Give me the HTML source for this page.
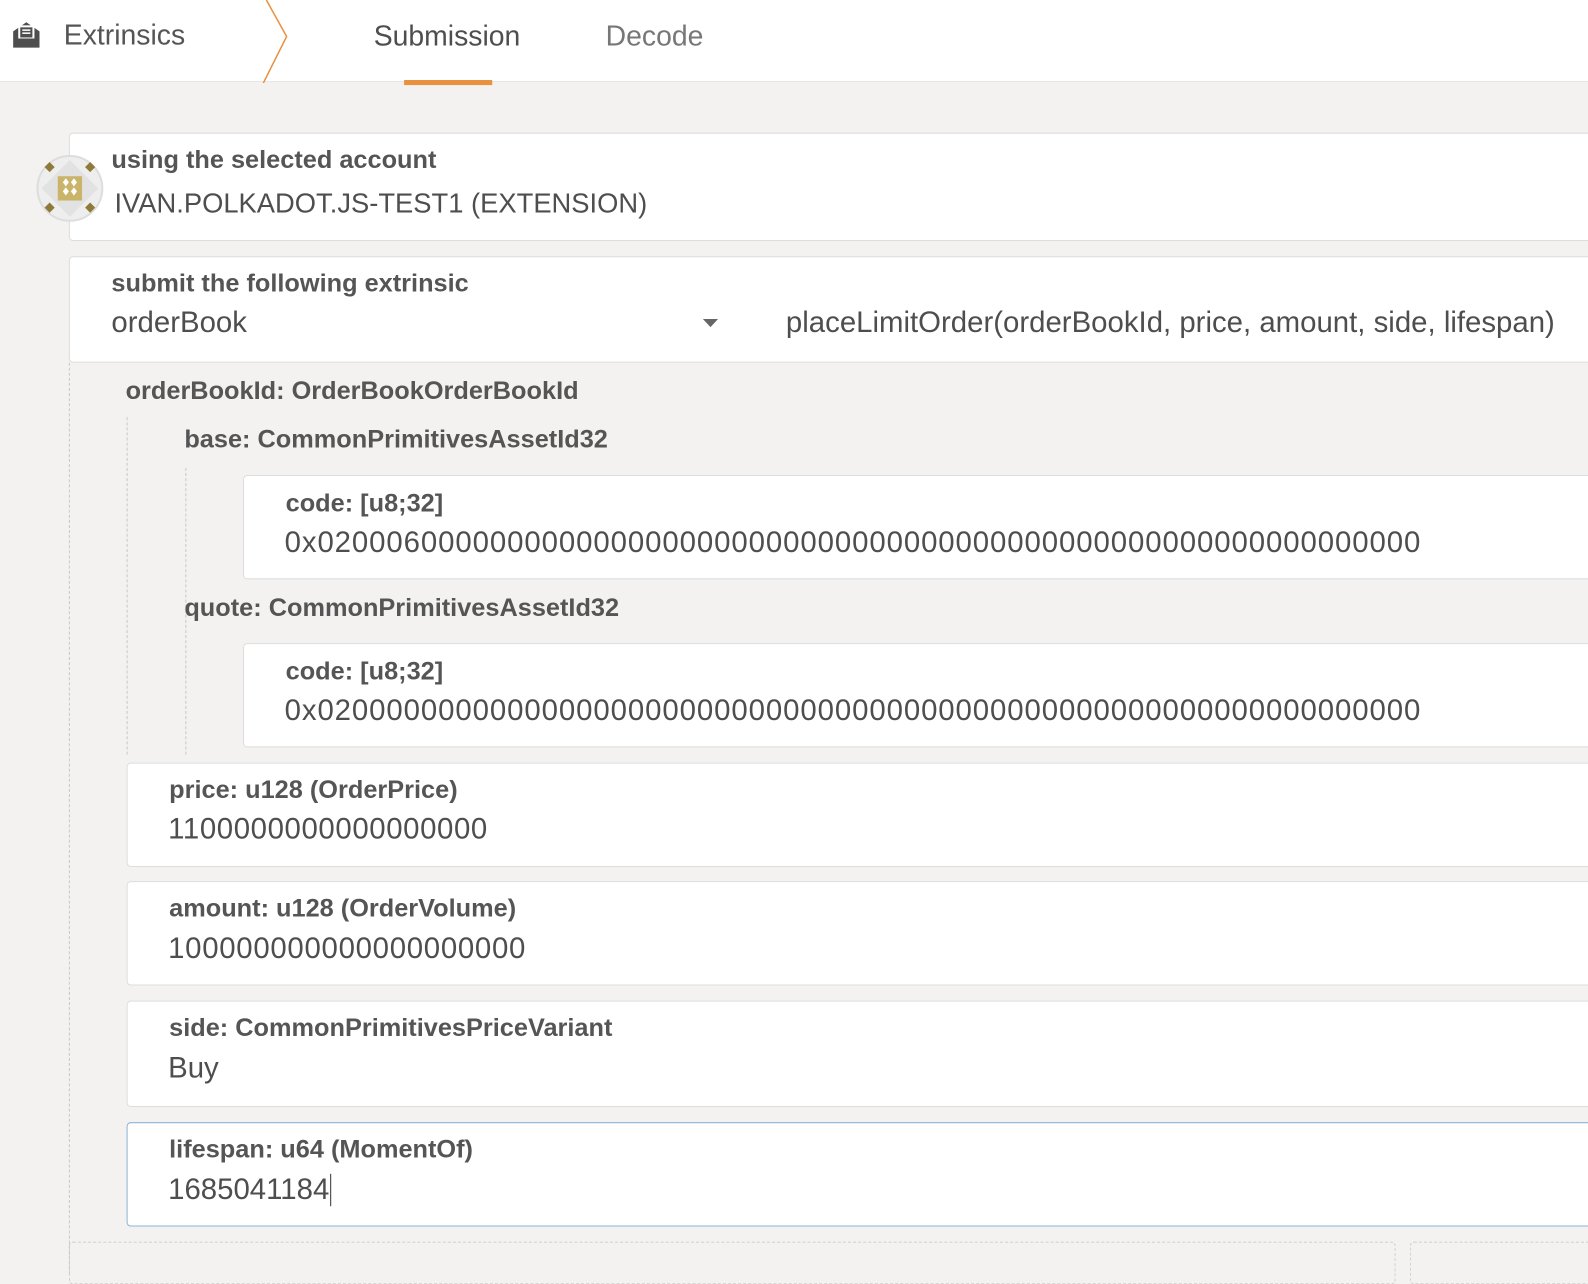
<!DOCTYPE html>
<html><head><meta charset="utf-8"><style>
body{margin:0;width:1588px;height:1256px;overflow:hidden;background:#f3f2f1;font-family:"Liberation Sans",sans-serif;color:#4e4e4e}
#w{position:absolute;left:0;top:0;width:1568px;height:1240px;transform:scale(1.0128);transform-origin:0 0}
.a{position:absolute;white-space:nowrap}
.hdr{position:absolute;left:0;top:0;width:1600px;height:80px;background:#fff;border-bottom:1px solid #e6e6e6}
.box{position:absolute;background:#fff;border:1px solid #ddd;border-radius:4px;right:-30px}
.lab{font-weight:bold;font-size:25px;color:#555}
.val{font-size:29px;color:#4e4e4e}
.dl{position:absolute;border-left:1px dashed #c8c8c8;width:0}
</style></head><body><div id="w">
<div class="hdr"></div>
<svg class="a" style="left:11px;top:20px" width="30" height="30" viewBox="0 0 30 30"><path d="M2 11 L15 2 L28 11 V27 H2Z" fill="#4e4e4e"/><rect x="7" y="5" width="16" height="13" fill="#fff"/><rect x="9" y="7" width="12" height="10" fill="#4e4e4e"/><rect x="11" y="9" width="8" height="1.5" fill="#fff"/><rect x="11" y="12" width="8" height="1.5" fill="#fff"/></svg>
<div class="a" style="left:63px;top:19px;font-size:28px;color:#555">Extrinsics</div>
<svg class="a" style="left:255px;top:0" width="35" height="82"><path d="M8 0 L28 36 L5 82" stroke="#e8913f" stroke-width="1.5" fill="none"/></svg>
<div class="a" style="left:369px;top:20px;font-size:28px;color:#4e4e4e">Submission</div>
<div class="a" style="left:399px;top:79px;width:87px;height:5px;background:#e8913f"></div>
<div class="a" style="left:598px;top:20px;font-size:28px;color:#777">Decode</div>

<div class="box" style="left:68px;top:131px;height:105px"></div>
<div class="a lab" style="left:110px;top:144px">using the selected account</div>
<div class="a val" style="left:113px;top:186px;font-size:27px">IVAN.POLKADOT.JS-TEST1 (EXTENSION)</div>
<svg class="a" style="left:35px;top:152px" width="68" height="68" viewBox="0 0 68 68"><circle cx="34" cy="34" r="32" fill="#eee" stroke="#ddd" stroke-width="2"/><path d="M34 6 L62 34 L34 62 L6 34Z" fill="#e2e2e2"/><rect x="22" y="22" width="24" height="24" fill="#c9b46a"/><g fill="#fff"><path d="M30 24l3 4-3 4-3-4z"/><path d="M38 24l3 4-3 4-3-4z"/><path d="M30 33l3 4-3 4-3-4z"/><path d="M38 33l3 4-3 4-3-4z"/></g><g fill="#8f7a3a"><path d="M14 8l5 5-5 5-5-5z"/><path d="M54 8l5 5-5 5-5-5z"/><path d="M14 48l5 5-5 5-5-5z"/><path d="M54 48l5 5-5 5-5-5z"/></g></svg>

<div class="box" style="left:68px;top:253px;height:103px"></div>
<div class="a lab" style="left:110px;top:266px">submit the following extrinsic</div>
<div class="a val" style="left:110px;top:303px">orderBook</div>
<svg class="a" style="left:694px;top:315px" width="16" height="10"><path d="M0 0H15L7.5 8Z" fill="#666"/></svg>
<div class="a val" style="left:776px;top:303px">placeLimitOrder(orderBookId, price, amount, side, lifespan)</div>

<div class="dl" style="left:68px;top:358px;height:900px"></div>
<div class="a lab" style="left:124px;top:372px">orderBookId: OrderBookOrderBookId</div>
<div class="dl" style="left:125px;top:412px;height:333px"></div>
<div class="a lab" style="left:182px;top:420px">base: CommonPrimitivesAssetId32</div>
<div class="dl" style="left:183px;top:462px;height:283px"></div>
<div class="box" style="left:240px;top:469px;height:101px"></div>
<div class="a lab" style="left:282px;top:483px">code: [u8;32]</div>
<div class="a val" style="left:281px;top:520px;letter-spacing:0.9px">0x0200060000000000000000000000000000000000000000000000000000000000</div>
<div class="a lab" style="left:182px;top:586px">quote: CommonPrimitivesAssetId32</div>
<div class="box" style="left:240px;top:635px;height:101px"></div>
<div class="a lab" style="left:282px;top:649px">code: [u8;32]</div>
<div class="a val" style="left:281px;top:686px;letter-spacing:0.9px">0x0200000000000000000000000000000000000000000000000000000000000000</div>

<div class="box" style="left:125px;top:753px;height:101px"></div>
<div class="a lab" style="left:167px;top:766px">price: u128 (OrderPrice)</div>
<div class="a val" style="left:166px;top:803px;letter-spacing:0.6px">1100000000000000000</div>
<div class="box" style="left:125px;top:870px;height:101px"></div>
<div class="a lab" style="left:167px;top:883px">amount: u128 (OrderVolume)</div>
<div class="a val" style="left:166px;top:921px;letter-spacing:0.7px">100000000000000000000</div>
<div class="box" style="left:125px;top:988px;height:103px"></div>
<div class="a lab" style="left:167px;top:1001px">side: CommonPrimitivesPriceVariant</div>
<div class="a val" style="left:166px;top:1039px">Buy</div>
<div class="box" style="left:125px;top:1108px;height:101px;border-color:#8fb4d4"></div>
<div class="a lab" style="left:167px;top:1121px">lifespan: u64 (MomentOf)</div>
<div class="a val" style="left:166px;top:1159px">1685041184<span style="border-left:1px solid #333;margin-left:1px"></span></div>

<div class="a" style="left:68px;top:1226px;width:1308px;height:40px;border:1px dashed #ccc;border-radius:4px"></div>
<div class="a" style="left:1392px;top:1226px;width:220px;height:40px;border:1px dashed #ccc;border-radius:4px"></div>
</div></body></html>
